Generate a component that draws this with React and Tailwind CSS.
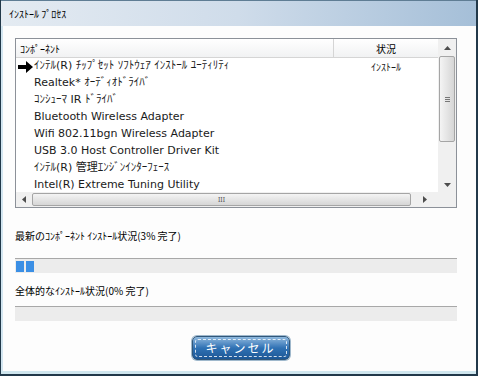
import React from 'react';

const jp = { fontFamily: '"Noto Sans CJK JP", "DejaVu Sans", sans-serif' };
const mixed = { fontFamily: '"DejaVu Sans", "Noto Sans CJK JP", sans-serif' };

const rows = [
  { name: 'ｲﾝﾃﾙ(R) ﾁｯﾌﾟｾｯﾄ ｿﾌﾄｳｪｱ ｲﾝｽﾄｰﾙ ﾕｰﾃｨﾘﾃｨ', status: 'ｲﾝｽﾄｰﾙ', current: true },
  { name: 'Realtek* ｵｰﾃﾞｨｵﾄﾞﾗｲﾊﾞ' },
  { name: 'ｺﾝｼｭｰﾏ IR ﾄﾞﾗｲﾊﾞ' },
  { name: 'Bluetooth Wireless Adapter' },
  { name: 'Wifi 802.11bgn Wireless Adapter' },
  { name: 'USB 3.0 Host Controller Driver Kit' },
  { name: 'ｲﾝﾃﾙ(R) 管理ｴﾝｼﾞﾝｲﾝﾀｰﾌｪｰｽ' },
  { name: 'Intel(R) Extreme Tuning Utility' },
];

function Arrow() {
  return (
    <svg width="15" height="12" viewBox="0 0 15 12" className="shrink-0">
      <path d="M0 4h8V0l7 6-7 6V8H0z" fill="#000" />
    </svg>
  );
}

function Tri({ dir }) {
  const d = {
    up: 'M0 4 L3.5 0 L7 4z',
    down: 'M0 0 L3.5 4 L7 0z',
    left: 'M4 0 L0 3.5 L4 7z',
    right: 'M0 0 L4 3.5 L0 7z',
  }[dir];
  const horiz = dir === 'left' || dir === 'right';
  return (
    <svg width={horiz ? 4 : 7} height={horiz ? 7 : 4} viewBox={horiz ? '0 0 4 7' : '0 0 7 4'}>
      <path d={d} fill="#4d4d4d" />
    </svg>
  );
}

function ProgressBar({ blocks }) {
  return (
    <div className="h-[15px] w-[442px] border-t border-[#a8a8a8] bg-[#ececec] flex items-center gap-[2px] pl-[1px]">
      {Array.from({ length: blocks }).map((_, i) => (
        <div key={i} className="w-[8px] h-[11px] bg-[#3b8fe5]" />
      ))}
    </div>
  );
}

export default function App() {
  return (
    <div className="w-[480px] h-[380px] bg-white overflow-hidden">
      <div className="w-[478px] h-[376px] border-l border-r-[2px] border-b-[2px] border-[#22394a] bg-[#fdfdfd] flex flex-col">
        {/* title bar */}
        <div className="h-[26px] shrink-0 bg-gradient-to-r from-[#e4ebf2] via-[#cfdcea] to-[#a5bfd8] flex items-center pl-[8px] border-t border-[#5f7d94]">
          <span className="text-[10px] text-black" style={jp}>ｲﾝｽﾄｰﾙ ﾌﾟﾛｾｽ</span>
        </div>

        <div className="flex-1 flex flex-col px-[12px] pt-[12px] border-l-[2px] border-[#d3e6f1]">
          {/* list box */}
          <div className="w-[442px] h-[170px] border border-[#8c9199] bg-white flex">
            <div className="w-[422px] flex flex-col">
              <div className="flex h-[19px] border-b border-[#d5d5d5] bg-gradient-to-b from-white to-[#f1f2f3] text-[10px] text-black" style={jp}>
                <div className="w-[318px] pl-[4px] flex items-center border-r border-[#d5d5d5]">ｺﾝﾎﾟｰﾈﾝﾄ</div>
                <div className="flex-1 flex items-center justify-center">状況</div>
              </div>
              <div className="flex-1 overflow-hidden">
                {rows.map((r, i) => (
                  <div key={i} className="h-[17px] flex items-center text-[11px] text-[#1a1a1a]" style={mixed}>
                    <div className="w-[318px] flex items-center">
                      <div className="w-[18px] flex justify-end pr-[1px]">{r.current && <Arrow />}</div>
                      <span className="whitespace-nowrap">{r.name}</span>
                    </div>
                    <div className="flex-1 text-center text-[10px]" style={jp}>{r.status}</div>
                  </div>
                ))}
              </div>
              {/* horizontal scrollbar */}
              <div className="h-[15px] shrink-0 flex items-center bg-[#f0f0f0]">
                <div className="w-[16px] flex justify-center"><Tri dir="left" /></div>
                <div className="w-[379px] h-[13px] rounded-[2px] border border-[#a5a5a5] bg-gradient-to-b from-[#f4f4f4] to-[#d6d6d6] flex items-center justify-center">
                  <span className="text-[7px] text-[#555] leading-none">III</span>
                </div>
                <div className="flex-1 flex justify-center"><Tri dir="right" /></div>
              </div>
            </div>
            {/* vertical scrollbar */}
            <div className="w-[18px] flex flex-col bg-[#f0f0f0]">
              <div className="h-[17px] flex items-center justify-center"><Tri dir="up" /></div>
              <div className="h-[86px] mx-[1px] rounded-[2px] border border-[#a5a5a5] bg-gradient-to-r from-[#f4f4f4] to-[#d6d6d6] flex items-center justify-center">
                <div className="flex flex-col gap-[1px]">
                  <div className="w-[5px] h-px bg-[#777]" />
                  <div className="w-[5px] h-px bg-[#777]" />
                  <div className="w-[5px] h-px bg-[#777]" />
                </div>
              </div>
              <div className="h-[36px]" />
              <div className="h-[14px] flex items-center justify-center"><Tri dir="down" /></div>
              <div className="flex-1 bg-[#f0f0f0]" />
            </div>
          </div>

          <div className="mt-[20px] text-[10px] text-black" style={jp}>最新のｺﾝﾎﾟｰﾈﾝﾄ ｲﾝｽﾄｰﾙ状況(3% 完了)</div>
          <div className="mt-[15px]"><ProgressBar blocks={2} /></div>
          <div className="mt-[10px] text-[10px] text-black" style={jp}>全体的なｲﾝｽﾄｰﾙ状況(0% 完了)</div>
          <div className="mt-[8px]"><ProgressBar blocks={0} /></div>

          <div className="flex justify-center mt-[15px] pl-[2px]">
            <button className="w-[98px] h-[24px] rounded-[5px] border border-[#31577a] bg-gradient-to-b from-[#8fb9de] via-[#2f72b4] to-[#1d5796] p-[2px] shadow-[0_0_0_1px_#9fb8cc]">
              <div className="w-full h-full border border-dashed border-white/80 rounded-[3px] flex items-center justify-center text-[12px] text-white tracking-[2px]" style={jp}>
                キャンセル
              </div>
            </button>
          </div>
        </div>
        <div className="h-[3px] bg-[#cfe6ee]" />
      </div>
    </div>
  );
}
